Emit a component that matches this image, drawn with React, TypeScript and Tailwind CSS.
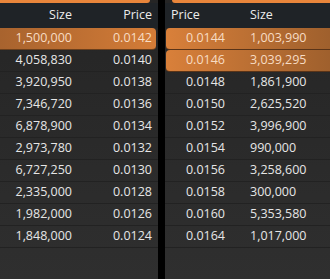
const bids = [
  ["1,500,000", "0.0142"],
  ["4,058,830", "0.0140"],
  ["3,920,950", "0.0138"],
  ["7,346,720", "0.0136"],
  ["6,878,900", "0.0134"],
  ["2,973,780", "0.0132"],
  ["6,727,250", "0.0130"],
  ["2,335,000", "0.0128"],
  ["1,982,000", "0.0126"],
  ["1,848,000", "0.0124"],
];

const asks = [
  ["0.0144", "1,003,990"],
  ["0.0146", "3,039,295"],
  ["0.0148", "1,861,900"],
  ["0.0150", "2,625,520"],
  ["0.0152", "3,996,900"],
  ["0.0154", "990,000"],
  ["0.0156", "3,258,600"],
  ["0.0158", "300,000"],
  ["0.0160", "5,353,580"],
  ["0.0164", "1,017,000"],
];

const BidPanel = () => {
  return (
    <div className="w-[158px] h-full flex flex-col bg-gradient-to-b from-[#252525] to-[#2f2f2f]">
      <div className="h-[3px] mr-[8px] bg-[#e8853b] rounded-br-[3px]" />
      <div className="h-[25px] flex items-center bg-[#1f2327] text-[#ececec]">
        <span className="w-[72px] text-right">Size</span>
        <span className="w-[80px] text-right">Price</span>
      </div>
      <div className="flex flex-col">
        {bids.map(([size, price], i) => (
          <div
            key={i}
            className={`h-[22px] flex items-center border-b ${
              i < 1
                ? "mr-[2px] rounded-r-[4px] bg-gradient-to-r from-[#a8632e] to-[#d47c37] text-[#f7dcc4] border-[#6a3f1c]"
                : "text-[#e6e6e6] border-[#222222]"
            }`}
          >
            <span className="w-[72px] text-right">{size}</span>
            <span className="w-[80px] text-right">{price}</span>
          </div>
        ))}
      </div>
    </div>
  );
};

const AskPanel = () => {
  return (
    <div className="flex-1 h-full flex flex-col bg-gradient-to-b from-[#252525] to-[#2f2f2f]">
      <div className="h-[3px] ml-[7px] bg-[#e8853b] rounded-bl-[3px]" />
      <div className="h-[25px] flex items-center bg-[#1f2327] text-[#ececec]">
        <span className="w-[85px] pl-[6px]">Price</span>
        <span>Size</span>
      </div>
      <div className="flex flex-col">
        {asks.map(([price, size], i) => (
          <div
            key={i}
            className={`h-[22px] flex items-center border-b ${
              i < 2
                ? "ml-[1px] rounded-l-[4px] bg-gradient-to-r from-[#d9803a] to-[#9f602d] text-[#f7dcc4] border-[#5a3418]"
                : "text-[#e6e6e6] border-[#222222]"
            }`}
          >
            <span className={`${i < 2 ? "w-[59px]" : "w-[60px]"} text-right`}>{price}</span>
            <span className="pl-[25px]">{size}</span>
          </div>
        ))}
      </div>
    </div>
  );
};

export default function App() {
  return (
    <div
      className="w-[330px] h-[279px] flex bg-black text-[12.5px] leading-none overflow-hidden"
      style={{ fontFamily: '"Open Sans", "Noto Sans", sans-serif' }}
    >
      <BidPanel />
      <div className="w-[7px] bg-black" />
      <AskPanel />
    </div>
  );
}
